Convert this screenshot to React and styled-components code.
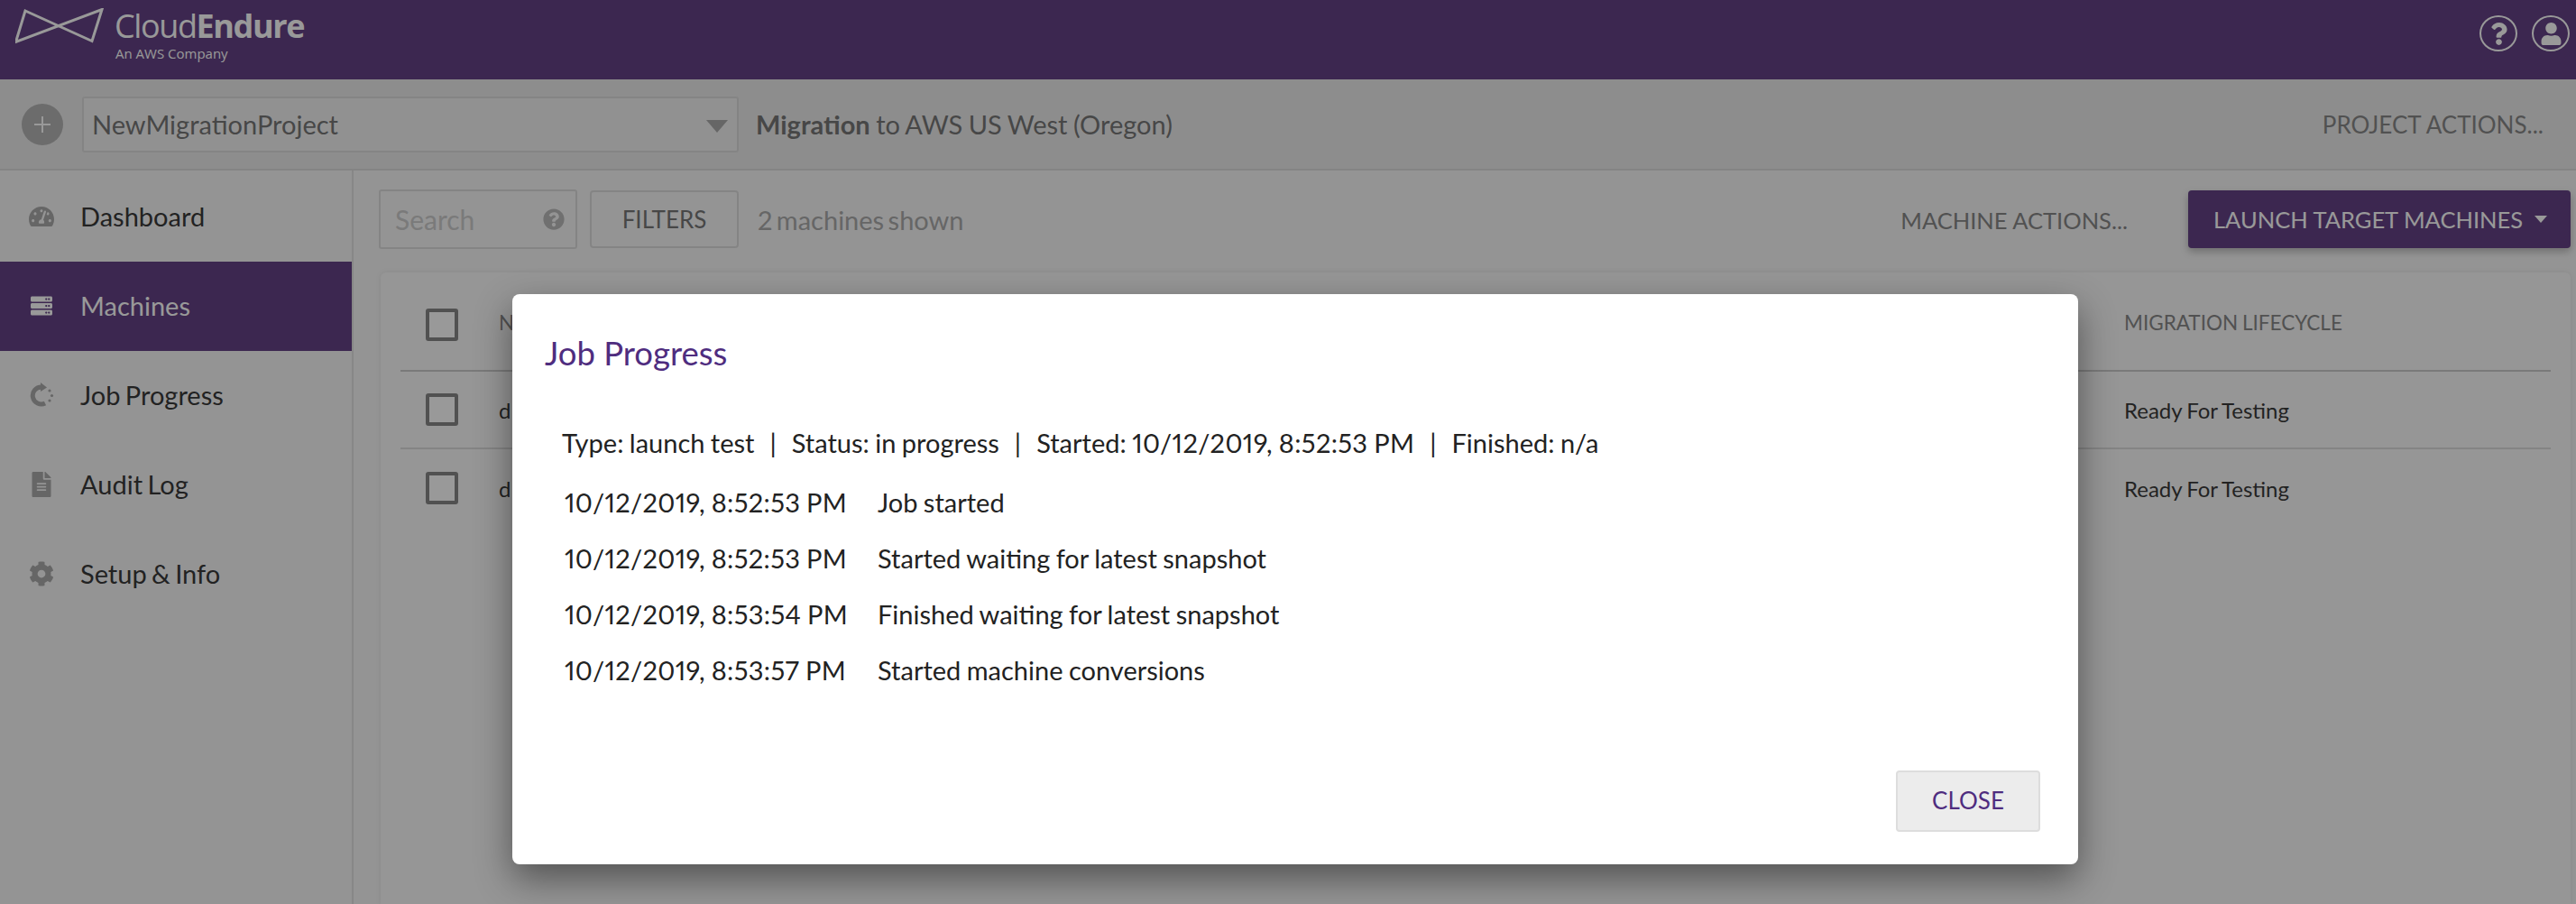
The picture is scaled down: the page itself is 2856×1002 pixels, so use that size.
import React from 'react'
import styled, { createGlobalStyle } from 'styled-components'
import { FaTachometerAlt, FaServer, FaFileAlt, FaCog, FaQuestionCircle, FaUser, FaQuestion } from 'react-icons/fa'

const GlobalStyle = createGlobalStyle`
  html, body {
    margin: 0;
    height: 100%;
    overflow: hidden;
    background: #f7f7f7;
    font-family: Lato, "Open Sans", sans-serif;
    font-variant-numeric: proportional-nums;
  }
  * { box-sizing: border-box; }
`

const purple = '#644285'

const Page = styled.div`
  position: relative;
  width: 2856px;
  height: 1002px;
  overflow: hidden;
  display: flex;
  flex-direction: column;
`

const Header = styled.header`
  height: 88px;
  flex: none;
  background: ${purple};
  display: flex;
  align-items: flex-start;
  justify-content: space-between;
  padding: 0 7px 0 17px;
  color: #fff;
`

const LogoLink = styled.div`
  display: flex;
  padding-top: 9px;
  gap: 12px;
`

const LogoText = styled.div`
  font-family: "Open Sans", sans-serif;
  display: flex;
  flex-direction: column;
`

const LogoName = styled.div`
  font-size: 36px;
  line-height: 40px;
  font-weight: 400;
  letter-spacing: -1.4px;
  b { font-weight: 700; }
`

const LogoSub = styled.div`
  font-size: 15px;
  line-height: 20px;
  padding-left: 1px;
`

const HeaderIcons = styled.div`
  display: flex;
  gap: 16px;
  padding-top: 17px;
`

const RoundIcon = styled.div`
  width: 42px;
  height: 40px;
  border: 2px solid #fff;
  border-radius: 50%;
  display: flex;
  align-items: center;
  justify-content: center;
  font-size: 25px;
`

const ProjectBar = styled.div`
  height: 101px;
  flex: none;
  background: #ececec;
  border-bottom: 2px solid #dcdcdc;
  display: flex;
  align-items: center;
  padding: 0 36px 0 24px;
`

const AddButton = styled.div`
  width: 46px;
  height: 46px;
  border-radius: 50%;
  background: #b4b4b4;
  display: flex;
  align-items: center;
  justify-content: center;
  margin-right: 21px;
`

const ProjectSelect = styled.div`
  width: 728px;
  height: 62px;
  border: 2px solid #ddd;
  border-radius: 3px;
  background: #f2f2f2;
  display: flex;
  align-items: center;
  justify-content: space-between;
  padding: 0 10px 0 9px;
  font-size: 29px;
  color: #777;
  margin-right: 19px;
`

const Caret = styled.span`
  width: 0;
  height: 0;
  margin-top: ${({ $drop }) => $drop || 0}px;
  border-left: ${({ $size }) => $size}px solid transparent;
  border-right: ${({ $size }) => $size}px solid transparent;
  border-top: ${({ $size }) => Math.round($size * 1.15)}px solid ${({ $color }) => $color};
`

const MigrationTitle = styled.div`
  font-size: 29px;
  word-spacing: -1px;
  color: #777;
  flex: 1;
  b { font-weight: 700; }
`

const ActionLink = styled.div`
  font-size: ${({ $size }) => $size}px;
  color: #888;
  white-space: nowrap;
  padding-top: ${({ $drop }) => $drop || 0}px;
`

const Body = styled.div`
  flex: 1;
  display: flex;
  min-height: 0;
`

const Sidebar = styled.nav`
  width: 392px;
  flex: none;
  background: #f7f7f7;
  border-right: 2px solid #e2e2e2;
  padding-top: 2px;
`

const NavItem = styled.div`
  height: 99px;
  display: flex;
  align-items: center;
  padding: 0 0 2px 30px;
  gap: 27px;
  font-size: 29px;
  word-spacing: -2px;
  color: ${({ $active }) => ($active ? '#fff' : '#3a3a3a')};
  background: ${({ $active }) => ($active ? purple : 'transparent')};
`

const NavIcon = styled.span`
  width: 32px;
  display: flex;
  justify-content: center;
  font-size: ${({ $size }) => $size}px;
  color: ${({ $active }) => ($active ? '#fff' : '#aaa')};
`

const Main = styled.main`
  flex: 1;
  min-width: 0;
  padding: 21px 6px 0 28px;
  display: flex;
  flex-direction: column;
`

const Toolbar = styled.div`
  display: flex;
  align-items: center;
  height: 66px;
  margin-bottom: 26px;
`

const SearchBox = styled.div`
  width: 220px;
  height: 66px;
  border: 2px solid #ddd;
  border-radius: 3px;
  display: flex;
  align-items: center;
  justify-content: space-between;
  padding: 0 12px 0 16px;
  font-size: 30px;
  color: #ccc;
  margin-right: 14px;
  svg { color: #bbb; font-size: 24px; }
`

const OutlineButton = styled.div`
  width: 165px;
  height: 64px;
  border: 2px solid #ddd;
  border-radius: 4px;
  display: flex;
  align-items: center;
  justify-content: center;
  font-size: 26px;
  color: #777;
  margin-right: 21px;
`

const ShownCount = styled.div`
  font-size: 29px;
  word-spacing: -3px;
  color: #aaa;
  flex: 1;
`

const PrimaryButton = styled.div`
  width: 424px;
  height: 64px;
  margin-left: 67px;
  background: ${purple};
  border-radius: 4px;
  box-shadow: 0 4px 8px rgba(0, 0, 0, 0.25);
  color: #fff;
  font-size: 25.5px;
  display: flex;
  align-items: center;
  gap: 13px;
  padding-left: 28px;
  white-space: nowrap;
`

const Card = styled.section`
  flex: 1;
  margin-left: 2px;
  background: #fafafa;
  border-radius: 6px 6px 0 0;
  box-shadow: 0 0 6px rgba(0, 0, 0, 0.08);
  padding: 0 22px;
`

const Row = styled.div`
  display: grid;
  grid-template-columns: 109px 1fr 473px;
  align-items: center;
  height: ${({ $head }) => ($head ? 110 : 86)}px;
  padding: ${({ $head }) => ($head ? '40px 0 34px' : '0')};
  border-bottom: ${({ $last, $head }) => ($last ? 'none' : `2px solid ${$head ? '#ccc' : '#ddd'}`)};
  font-size: ${({ $head }) => ($head ? 22.5 : 24)}px;
  word-spacing: -1px;
  color: ${({ $head }) => ($head ? '#888' : '#3a3a3a')};
`

const HeadLabel = styled.span`
  padding-bottom: 6px;
`

const Check = styled.span`
  display: block;
  margin-left: 28px;
  width: 36px;
  height: 36px;
  border: 4px solid #888;
  border-radius: 3px;
  background: #fff;
`

const Overlay = styled.div`
  position: absolute;
  inset: 0;
  background: rgba(0, 0, 0, 0.4);
  padding: 326px 0 0 568px;
`

const Modal = styled.div`
  width: 1736px;
  height: 632px;
  background: #fff;
  border-radius: 8px;
  box-shadow: 0 16px 40px rgba(0, 0, 0, 0.45);
  padding: 43px 42px 36px 36px;
  display: flex;
  flex-direction: column;
`

const ModalTitle = styled.h2`
  margin: 0 0 58px;
  font-size: 36.5px;
  line-height: 44px;
  font-weight: 400;
  color: #4f2d7f;
`

const InfoLine = styled.div`
  display: flex;
  font-size: 29px;
  word-spacing: -1px;
  line-height: 40px;
  color: #222;
  margin: 0 0 16px 19px;
  white-space: pre;
`

const Pipe = styled.span`
  padding: 0 17px;
`

const DateText = styled.span`
  letter-spacing: 0.35px;
`

const LogRow = styled.div`
  display: grid;
  grid-template-columns: 347px 1fr;
  font-size: 29px;
  word-spacing: -1px;
  line-height: 62px;
  color: #222;
  margin: -1px 0 1px 22px;
`

const ModalFooter = styled.div`
  margin-top: auto;
  display: flex;
  justify-content: flex-end;
`

const CloseButton = styled.div`
  width: 160px;
  height: 68px;
  background: #ececec;
  border: 2px solid #ddd;
  border-radius: 4px;
  display: flex;
  align-items: center;
  justify-content: center;
  font-size: 26px;
  padding-bottom: 2px;
  color: #4f2d7f;
`

const Logo = () => (
  <svg width="98" height="40" viewBox="17 9 98 40" fill="none" stroke="#fff" strokeWidth="3">
    <path d="M28 12 L17.5 46.5 L113 10.5 L102 45.5 Z" />
  </svg>
)

const PlusIcon = () => (
  <svg width="20" height="20" viewBox="0 0 20 20" stroke="#fff" strokeWidth="2">
    <path d="M10 1 V19 M1 10 H19" />
  </svg>
)

const JobIcon = () => (
  <svg width="27" height="28" viewBox="0 0 27 28" fill="currentColor">
    <path d="M13 5 A9.5 9.5 0 1 0 17 23" fill="none" stroke="currentColor" strokeWidth="5" />
    <path d="M12 0 L19 5.5 L12 10 Z" />
    <circle cx="22" cy="9" r="1.6" />
    <circle cx="24.5" cy="14.5" r="1.6" />
    <circle cx="22" cy="20" r="1.6" />
  </svg>
)

const navItems = [
  { label: 'Dashboard', icon: <FaTachometerAlt />, size: 28 },
  { label: 'Machines', icon: <FaServer />, size: 24, active: true },
  { label: 'Job Progress', icon: <JobIcon />, size: 28 },
  { label: 'Audit Log', icon: <FaFileAlt />, size: 28 },
  { label: 'Setup & Info', icon: <FaCog />, size: 28 },
]

const logEntries = [
  ['10/12/2019, 8:52:53 PM', 'Job started'],
  ['10/12/2019, 8:52:53 PM', 'Started waiting for latest snapshot'],
  ['10/12/2019, 8:53:54 PM', 'Finished waiting for latest snapshot'],
  ['10/12/2019, 8:53:57 PM', 'Started machine conversions'],
]

const App = () => {
  return (
    <Page>
      <GlobalStyle />
      <Header>
        <LogoLink>
          <Logo />
          <LogoText>
            <LogoName>Cloud<b>Endure</b></LogoName>
            <LogoSub>An AWS Company</LogoSub>
          </LogoText>
        </LogoLink>
        <HeaderIcons>
          <RoundIcon><FaQuestion /></RoundIcon>
          <RoundIcon><FaUser /></RoundIcon>
        </HeaderIcons>
      </Header>
      <ProjectBar>
        <AddButton><PlusIcon /></AddButton>
        <ProjectSelect>
          NewMigrationProject
          <Caret $size={12} $color="#aaa" $drop={4} />
        </ProjectSelect>
        <MigrationTitle><b>Migration</b> to AWS US West (Oregon)</MigrationTitle>
        <ActionLink $size={26}>PROJECT ACTIONS...</ActionLink>
      </ProjectBar>
      <Body>
        <Sidebar>
          {navItems.map((item) => (
            <NavItem key={item.label} $active={item.active}>
              <NavIcon $active={item.active} $size={item.size}>{item.icon}</NavIcon>
              {item.label}
            </NavItem>
          ))}
        </Sidebar>
        <Main>
          <Toolbar>
            <SearchBox>Search<FaQuestionCircle /></SearchBox>
            <OutlineButton>FILTERS</OutlineButton>
            <ShownCount>2 machines shown</ShownCount>
            <ActionLink $size={25.5} $drop={2}>MACHINE ACTIONS...</ActionLink>
            <PrimaryButton>
              LAUNCH TARGET MACHINES
              <Caret $size={7} $color="#fff" />
            </PrimaryButton>
          </Toolbar>
          <Card>
            <Row $head>
              <Check />
              <HeadLabel>NAME</HeadLabel>
              <HeadLabel>MIGRATION LIFECYCLE</HeadLabel>
            </Row>
            <Row>
              <Check />
              <span>d</span>
              <span>Ready For Testing</span>
            </Row>
            <Row $last>
              <Check />
              <span>d</span>
              <span>Ready For Testing</span>
            </Row>
          </Card>
        </Main>
      </Body>
      <Overlay>
        <Modal>
          <ModalTitle>Job Progress</ModalTitle>
          <InfoLine>
            Type: launch test<Pipe>|</Pipe>Status: in progress<Pipe>|</Pipe>Started: <DateText>10/12/2019, 8:52:53 PM</DateText><Pipe>|</Pipe>Finished: n/a
          </InfoLine>
          {logEntries.map(([time, message]) => (
            <LogRow key={time + message}>
              <DateText>{time}</DateText>
              <span>{message}</span>
            </LogRow>
          ))}
          <ModalFooter>
            <CloseButton>CLOSE</CloseButton>
          </ModalFooter>
        </Modal>
      </Overlay>
    </Page>
  )
}

export default App
